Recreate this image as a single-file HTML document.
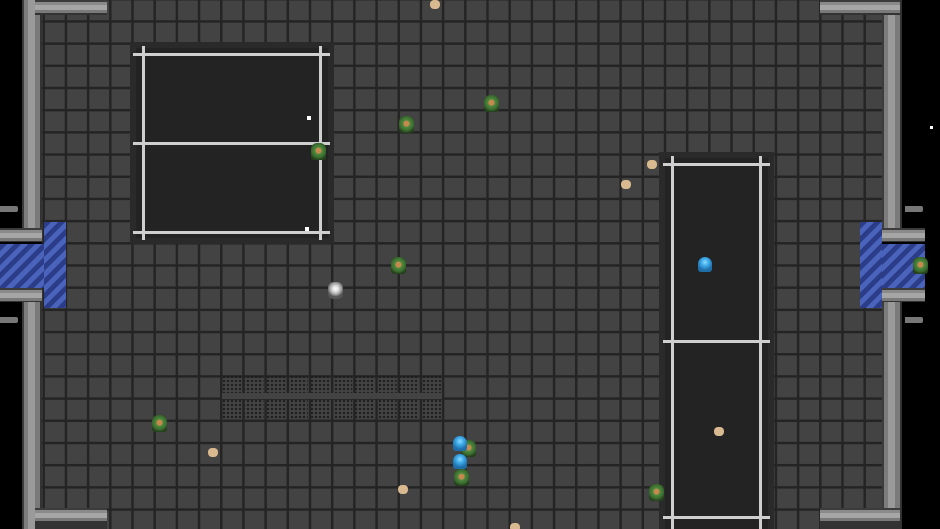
<!DOCTYPE html>
<html><head><meta charset="utf-8"><style>
html,body{margin:0;padding:0;background:#000;width:940px;height:529px;overflow:hidden;position:relative;font-family:"Liberation Sans",sans-serif}
div{position:absolute;box-sizing:border-box}
.floor{left:42px;top:0;width:840px;height:529px;background-color:#434343;
background-image:linear-gradient(90deg,#242424 2.4px,transparent 2.4px),linear-gradient(#242424 2.4px,transparent 2.4px);
background-size:22.2px 22.2px;background-position:0.5px -2px}
.wall{background:linear-gradient(90deg,#3c3c3c 0,#3c3c3c 2px,#7c7c7c 2px,#7c7c7c 6px,#9a9a9a 6px,#9a9a9a 13px,#7a7a7a 13px,#7a7a7a 18px,#333 18px)}
.hwall{background:linear-gradient(#3c3c3c 0,#3c3c3c 2px,#8a8a8a 2px,#8a8a8a 5px,#a6a6a6 5px,#a6a6a6 10px,#7a7a7a 10px,#7a7a7a 13px,#333 13px)}
.blue{background:repeating-linear-gradient(135deg,#2b3d88 0,#2b3d88 5px,#4a64bc 5px,#4a64bc 10px)}
.room{background:#232323;box-shadow:0 0 0 6px #2a2a2a}
.rail{background:#cfcfcf}
.sol{width:15px;height:17px;border-radius:6px 6px 3px 3px;background:radial-gradient(circle at 50% 45%,#c8894e 0,#c8894e 2.5px,#4e8a3e 3.5px,#3a6a2e 7px,#24401c 9px)}
.oct{width:14px;height:15px;border-radius:7px 7px 3px 3px;background:radial-gradient(circle at 50% 35%,#8adaff 0,#3aa6e6 4px,#1f6ea8 8px)}
.deb{width:10px;height:9px;border-radius:4px;background:#d8b990}
.bolt{width:18px;height:6px;background:#777;border-radius:0 2px 2px 0}
</style></head><body>
<div class="floor"></div>

<div class="wall" style="left:22px;top:0;width:20px;height:240px"></div>
<div class="hwall" style="left:0;top:228px;width:42px;height:14px"></div>
<div class="wall" style="left:22px;top:288px;width:20px;height:241px"></div>
<div class="hwall" style="left:0;top:288px;width:42px;height:14px"></div>
<div class="hwall" style="left:35px;top:0;width:72px;height:15px"></div>
<div class="hwall" style="left:35px;top:508px;width:72px;height:21px"></div>
<div class="bolt" style="left:0;top:206px"></div>
<div class="bolt" style="left:0;top:317px"></div>
<div class="blue" style="left:44px;top:222px;width:22px;height:86px"></div>
<div class="blue" style="left:0;top:244px;width:44px;height:44px"></div>

<div class="wall" style="left:882px;top:0;width:20px;height:240px"></div>
<div class="hwall" style="left:882px;top:228px;width:43px;height:14px"></div>
<div class="wall" style="left:882px;top:288px;width:20px;height:241px"></div>
<div class="hwall" style="left:882px;top:288px;width:43px;height:14px"></div>
<div class="hwall" style="left:820px;top:0;width:80px;height:15px"></div>
<div class="hwall" style="left:820px;top:508px;width:80px;height:21px"></div>
<div class="bolt" style="left:905px;top:206px"></div>
<div class="bolt" style="left:905px;top:317px"></div>
<div class="blue" style="left:860px;top:222px;width:22px;height:86px"></div>
<div class="blue" style="left:882px;top:244px;width:43px;height:44px"></div>

<div class="room" style="left:136px;top:48px;width:192px;height:190px"></div>
<div class="rail" style="left:133px;top:53px;width:197px;height:3px"></div>
<div class="rail" style="left:133px;top:142px;width:197px;height:3px"></div>
<div class="rail" style="left:133px;top:231px;width:197px;height:3px"></div>
<div class="rail" style="left:142px;top:46px;width:3px;height:194px"></div>
<div class="rail" style="left:319px;top:46px;width:3px;height:194px"></div>
<div style="left:307px;top:116px;width:4px;height:4px;background:#fff"></div>
<div style="left:305px;top:227px;width:4px;height:4px;background:#fff"></div>

<div class="room" style="left:665px;top:158px;width:103px;height:371px"></div>
<div class="rail" style="left:663px;top:163px;width:107px;height:3px"></div>
<div class="rail" style="left:663px;top:340px;width:107px;height:3px"></div>
<div class="rail" style="left:663px;top:516px;width:107px;height:3px"></div>
<div class="rail" style="left:671px;top:156px;width:3px;height:373px"></div>
<div class="rail" style="left:759px;top:156px;width:3px;height:373px"></div>

<div style="left:222px;top:375px;width:220px;height:44px;
background-image:radial-gradient(#1e1e1e 1px,transparent 1.4px);background-size:4px 4px;
-webkit-mask:linear-gradient(90deg,#000 19px,transparent 19px) 0 0/22.2px 100%;mask:linear-gradient(90deg,#000 19px,transparent 19px) 0 0/22.2px 100%"></div>
<div style="left:222px;top:393px;width:220px;height:6px;background:#434343"></div>

<div class="sol" style="left:311px;top:143px"></div>
<div class="sol" style="left:399px;top:116px"></div>
<div class="sol" style="left:484px;top:95px"></div>
<div class="sol" style="left:391px;top:257px"></div>
<div class="sol" style="left:152px;top:415px"></div>
<div class="sol" style="left:461px;top:440px"></div>
<div class="sol" style="left:454px;top:469px"></div>
<div class="sol" style="left:649px;top:484px"></div>
<div class="sol" style="left:913px;top:257px"></div>
<div class="oct" style="left:453px;top:436px"></div>
<div class="oct" style="left:453px;top:454px"></div>
<div class="oct" style="left:698px;top:257px"></div>
<div class="deb" style="left:647px;top:160px"></div>
<div class="deb" style="left:621px;top:180px"></div>
<div class="deb" style="left:208px;top:448px"></div>
<div class="deb" style="left:398px;top:485px"></div>
<div class="deb" style="left:714px;top:427px"></div>
<div class="deb" style="left:510px;top:523px"></div>
<div class="deb" style="left:430px;top:0"></div>
<div style="left:328px;top:282px;width:15px;height:17px;border-radius:5px;background:radial-gradient(circle at 50% 40%,#fff 0,#ddd 3px,#999 6px,#555 8px)"></div>
<div style="left:930px;top:126px;width:3px;height:3px;background:#fff"></div>
</body></html>
